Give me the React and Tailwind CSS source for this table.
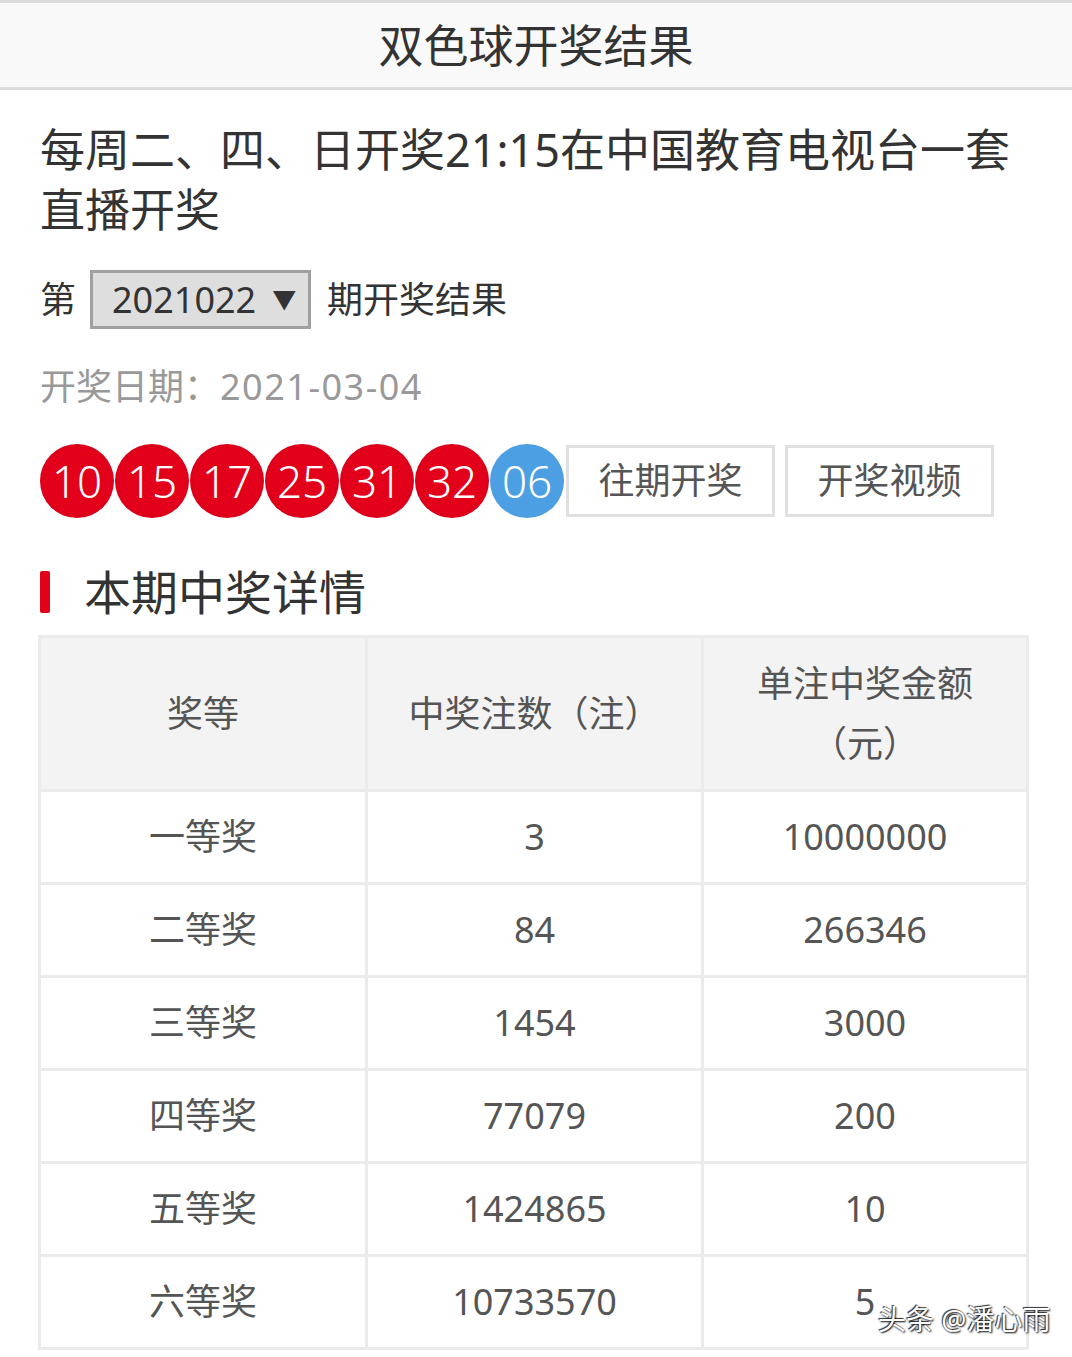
const reds = ["10", "15", "17", "25", "31", "32"];

const rows = [
  ["一等奖", "3", "10000000"],
  ["二等奖", "84", "266346"],
  ["三等奖", "1454", "3000"],
  ["四等奖", "77079", "200"],
  ["五等奖", "1424865", "10"],
  ["六等奖", "10733570", "5"],
];

const App = () => {
  return (
    <div
      className="relative w-[1072px] h-[1357px] bg-white overflow-hidden text-[#333]"
      style={{ fontFamily: '"Noto Sans", "Noto Sans CJK SC", sans-serif' }}
    >
      {/* top bar */}
      <header className="h-[90px] bg-[#f9f9f9] border-t-[3px] border-b-[3px] border-[#dcdcdc] flex items-center justify-center">
        <h1 className="text-[45px] leading-none text-[#333]">双色球开奖结果</h1>
      </header>

      <div className="px-[40px]">
        {/* schedule */}
        <p className="mt-[30px] text-[45px] leading-[60px] text-[#333]">
          每周二、四、日开奖21:15在中国教育电视台一套直播开奖
        </p>

        {/* issue select */}
        <div className="mt-[30px] flex items-center h-[59px] text-[36px] text-[#333]">
          <span>第</span>
          <div className="ml-[14px] h-[59px] w-[221px] bg-[#dedede] border-[3px] border-[#a0a0a0] flex items-center pl-[19px]">
            <span>2021022</span>
            <span className="ml-[16px] text-[24px]">▼</span>
          </div>
          <span className="ml-[16px]">期开奖结果</span>
        </div>

        {/* date */}
        <p className="mt-[33px] text-[36px] leading-[50px] text-[#999]">
          开奖日期：<span className="tracking-[1.5px]">2021-03-04</span>
        </p>

        {/* balls + buttons */}
        <div className="mt-[32px] flex items-center">
          {reds.map((n) => (
            <div
              key={n}
              className="w-[74px] h-[74px] mr-[1px] rounded-full bg-[radial-gradient(circle,#e3001b_62%,#b5001c_100%)] flex items-center justify-center text-white text-[44px] leading-none font-light"
            >
              {n}
            </div>
          ))}
          <div className="w-[74px] h-[74px] rounded-full bg-[radial-gradient(circle,#4c9fe2_68%,#3a86c8_100%)] flex items-center justify-center text-white text-[44px] leading-none font-light">
            06
          </div>
          <button className="ml-[2px] w-[209px] h-[72px] border-[3px] border-[#e0e0e0] bg-white text-[36px] text-[#555]">
            往期开奖
          </button>
          <button className="ml-[10px] w-[209px] h-[72px] border-[3px] border-[#e0e0e0] bg-white text-[36px] text-[#555]">
            开奖视频
          </button>
        </div>

        {/* section title */}
        <div className="mt-[50px] flex items-center h-[48px]">
          <div className="w-[10px] h-[42px] bg-[#e0001a] rounded-[2px]" />
          <h2 className="ml-[34px] text-[47px] leading-none text-[#333]">本期中奖详情</h2>
        </div>

        {/* table */}
        <table className="mt-[19px] -ml-[2px] border-collapse text-[36px] text-[#555] text-center">
          <thead>
            <tr className="bg-[#f3f3f3] h-[154px]">
              <th className="w-[327px] border-[3px] border-[#ebebeb] font-normal">奖等</th>
              <th className="w-[336px] border-[3px] border-[#ebebeb] font-normal">中奖注数（注）</th>
              <th className="w-[325px] border-[3px] border-[#ebebeb] font-normal leading-[60px]">
                单注中奖金额
                <br />
                （元）
              </th>
            </tr>
          </thead>
          <tbody>
            {rows.map((r) => (
              <tr key={r[0]} className="h-[93px]">
                {r.map((c, i) => (
                  <td key={i} className="border-[3px] border-[#ebebeb]">
                    {c}
                  </td>
                ))}
              </tr>
            ))}
          </tbody>
        </table>
      </div>

      {/* watermark */}
      <div
        className="absolute left-[878px] top-[1305px] text-[28px] leading-none text-white"
        style={{ textShadow: "1px 1px 2px #000, -1px -1px 1px #333" }}
      >
        头条 @潘心雨
      </div>
    </div>
  );
};

export default App;
